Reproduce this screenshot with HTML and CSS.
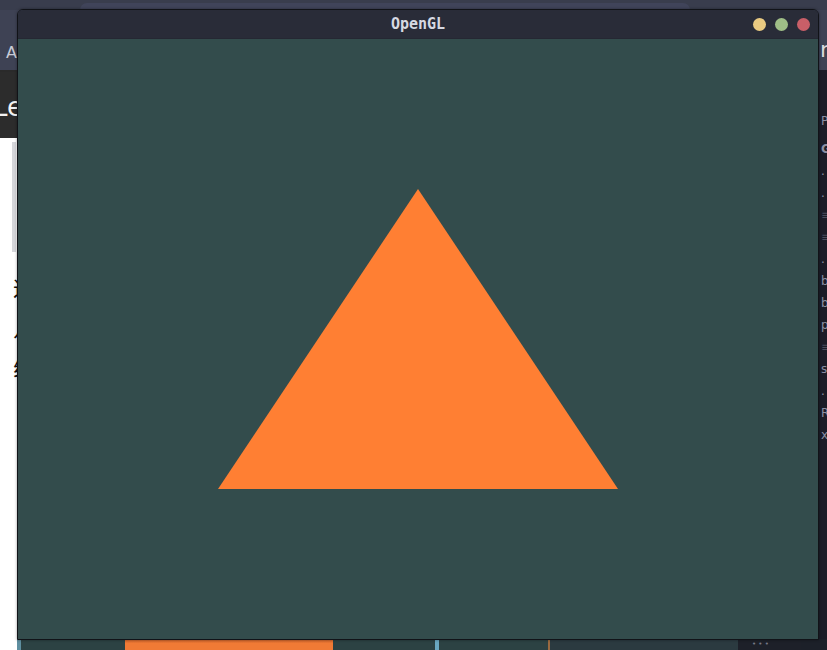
FILE: index.html
```html
<!DOCTYPE html>
<html>
<head>
<meta charset="utf-8">
<link rel="stylesheet" href="styles.css">
</head>
<body>
<div class="desk">
  <div class="browser">
    <div class="tabstrip"><div class="tab"></div></div>
    <div class="toolbar">
      <span class="tb-left">Ap</span>
      <span class="tb-right">r</span>
    </div>
    <div class="page">
      <div class="main">
        <div class="banner"><span class="banner-title">Le</span></div>
        <div class="article">
          <div class="scroll"></div>
          <div class="text">
            <p>这</p>
            <p>几</p>
            <p>线</p>
          </div>
        </div>
      </div>
      <div class="side">
        <span class="s1">P</span>
        <span class="s2">G</span>
        <span>.</span>
        <span>.</span>
        <span class="bars">≡</span>
        <span class="bars">≡</span>
        <span>.</span>
        <span>b</span>
        <span>b</span>
        <span>p</span>
        <span class="bars">≡</span>
        <span>s</span>
        <span>.</span>
        <span>R</span>
        <span>x</span>
      </div>
    </div>
    <div class="dock">
      <div class="d1"></div>
      <div class="d2"></div>
      <div class="d3"></div>
      <div class="d4"></div>
      <div class="d5"></div>
      <div class="d6"><span class="dots">• • •</span></div>
      <div class="d7"></div>
    </div>
  </div>

  <div class="window">
    <div class="titlebar">
      <span class="title">OpenGL</span>
      <div class="lights">
        <span class="light yellow"></span>
        <span class="light green"></span>
        <span class="light red"></span>
      </div>
    </div>
    <div class="canvas">
      <svg width="800" height="600" viewBox="0 0 800 600">
        <polygon points="200,450 600,450 400,150" fill="#ff7f33"/>
      </svg>
    </div>
  </div>
</div>
</body>
</html>
```

FILE: styles.css
```css
* { box-sizing: border-box; }
html, body { margin: 0; padding: 0; }
body { width: 827px; height: 650px; overflow: hidden; background: #3c4051; font-family: "DejaVu Sans", sans-serif; }

.desk { position: relative; width: 827px; height: 650px; overflow: hidden; }

.browser { display: flex; flex-direction: column; width: 827px; height: 650px; }

.tabstrip { height: 10px; background: #393d4d; padding: 3px 137px 0 80px; display: flex; }
.tab { flex: 1; background: #40445a; border-radius: 7px 7px 0 0; }

.toolbar { height: 60px; background: #3e4254; display: flex; align-items: center; justify-content: space-between; padding: 24px 0 0 6px; color: #c9ccd6; font-size: 16px; }
.tb-right { font-size: 22px; color: #d8d8dc; margin-right: -2px; margin-top: -6px; }

.page { flex: 1; display: flex; min-height: 0; }
.main { flex: 1; display: flex; flex-direction: column; background: #ffffff; }
.banner { height: 68px; background: #2c2c2c; display: flex; align-items: center; border-top: 2px solid #2a2a2a; }
.banner-title { color: #f2f2f2; font-size: 26px; margin-left: -7px; margin-top: 4px; }
.article { flex: 1; display: flex; }
.scroll { width: 4px; margin-left: 12px; margin-top: 4px; height: 110px; background: #d6d7db; }
.text { padding-top: 138px; margin-left: -3px; }
.text p { margin: 0 0 18px; font-family: "Noto Sans CJK SC", sans-serif; font-size: 21px; line-height: 22px; color: #111; }

.side { width: 9px; background: #1b1c27; display: flex; flex-direction: column; padding-top: 40px; padding-left: 3px; color: #8c8fa3; font-size: 12px; line-height: 22px; overflow: hidden; }
.side .s1 { margin-bottom: 6px; }
.side .s2 { font-weight: bold; }
.side .bars { color: #4a4d5c; }

.dock { position: absolute; left: 0; top: 639px; width: 827px; height: 11px; display: flex; }
.d1 { width: 125px; background: #2c4243; border-left: 17px solid #ffffff; box-shadow: inset 4px 0 0 #5f8fa0; }
.d2 { width: 208px; background: linear-gradient(#c8602a, #f07a35 40%); }
.d3 { width: 106px; background: #2c4243; border-right: 4px solid #6aa7c0; }
.d4 { width: 109px; background: #2c4243; }
.d5 { width: 190px; background: #2b3a40; border-left: 2px solid #9a6a40; }
.d6 { width: 63px; background: #1d2029; color: #777a88; font-size: 7px; line-height: 11px; padding-left: 14px; }
.d7 { flex: 1; background: #1c2029; }

.window { position: absolute; left: 17px; top: 9px; width: 802px; height: 631px; border: 1px solid #111318; border-radius: 6px 6px 0 0; overflow: hidden; display: flex; flex-direction: column; box-shadow: 0 0 3px rgba(0,0,0,0.4); }
.titlebar { height: 29px; background: #292c38; position: relative; display: flex; align-items: center; justify-content: center; border-bottom: 1px solid #252833; }
.title { font-family: "DejaVu Sans Mono", monospace; font-weight: bold; font-size: 15px; color: #d6d9e2; }
.lights { position: absolute; right: 8px; top: 8px; display: flex; gap: 9px; }
.light { width: 13px; height: 13px; border-radius: 50%; display: block; }
.yellow { background: #eacb82; }
.green { background: #9fbe87; }
.red { background: #c95f68; }
.canvas { width: 800px; height: 600px; background: #334c4c; }
.canvas svg { display: block; }
```
